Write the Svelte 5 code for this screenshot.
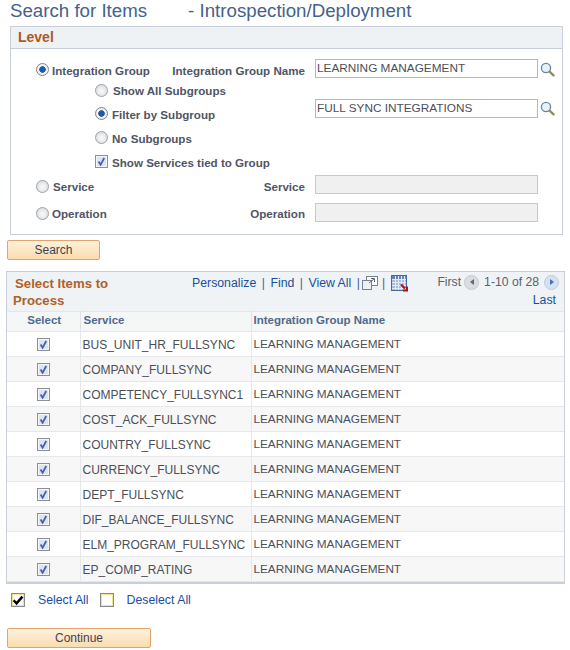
<script>
  const rows = ['BUS_UNIT_HR_FULLSYNC','COMPANY_FULLSYNC','COMPETENCY_FULLSYNC1','COST_ACK_FULLSYNC','COUNTRY_FULLSYNC','CURRENCY_FULLSYNC','DEPT_FULLSYNC','DIF_BALANCE_FULLSYNC','ELM_PROGRAM_FULLSYNC','EP_COMP_RATING'];
</script>

{#snippet radio(on)}
  <span class="radio" class:on></span>
{/snippet}
{#snippet check()}
  <svg class="chk" width="13" height="13" viewBox="0 0 13 13"><rect x=".5" y=".5" width="12" height="12" fill="#d5dbe8" stroke="#8b8f96"/><rect x="1.5" y="1.5" width="10" height="10" fill="#dde3f0" stroke="#f4f6fa"/><path d="M3.6 6.6 5.6 9.8 9.2 3" fill="none" stroke="#4460b0" stroke-width="1.8"/></svg>
{/snippet}
{#snippet lens()}
  <svg class="lens" width="15" height="15" viewBox="0 0 15 15"><path d="M9.5 9.5l4 3.8" stroke="#8f8f4a" stroke-width="2.4" stroke-linecap="round"/><circle cx="6" cy="6" r="4.6" fill="#e6f1f8" stroke="#6b8598" stroke-width="1.3"/></svg>
{/snippet}

<div class="page">
  <h1>Search for Items<span class="gap"></span>- Introspection/Deployment</h1>
  <section class="level">
    <div class="levelhead">Level</div>
    <div class="levelbody">
      <div class="l row1">
        <span class="c1">{@render radio(true)}<b>Integration Group</b></span>
        <b class="lab">Integration Group Name</b>
        <span class="inp">LEARNING MANAGEMENT</span>{@render lens()}
      </div>
      <div class="sub s1">{@render radio(false)}<b class="far">Show All Subgroups</b></div>
      <div class="sub s2">
        <span class="subl">{@render radio(true)}<b>Filter by Subgroup</b></span>
        <span class="inp">FULL SYNC INTEGRATIONS</span>{@render lens()}
      </div>
      <div class="sub s3">{@render radio(false)}<b>No Subgroups</b></div>
      <div class="sub s4">{@render check()}<b>Show Services tied to Group</b></div>
      <div class="l row2">
        <span class="c1">{@render radio(false)}<b class="far">Service</b></span>
        <b class="lab">Service</b>
        <span class="inp off"></span>
      </div>
      <div class="l row3">
        <span class="c1">{@render radio(false)}<b>Operation</b></span>
        <b class="lab">Operation</b>
        <span class="inp off"></span>
      </div>
    </div>
  </section>

  <button class="btn search">Search</button>

  <section class="grid">
    <div class="ghead">
      <div class="gtitle"><span class="se">Select Items to</span><br />Process</div>
      <div class="gnav">
        <span class="a">Personalize</span><i>|</i><span class="a">Find</span><i>|</i><span class="a">View All</span><i>|</i>
        <svg class="ico pop" width="16" height="14" viewBox="0 0 16 14"><rect x="4.5" y=".5" width="11" height="9" fill="#fff" stroke="#79828c"/><rect x=".5" y="4.5" width="9" height="9" fill="#eef1f3" stroke="#79828c"/><path d="M7 7l5-4M9 2.5h3.5V6" fill="none" stroke="#5c6670"/></svg>
        <i>|</i>
        <svg class="ico" width="17" height="17" viewBox="0 0 17 17"><rect x=".5" y=".5" width="15" height="15" fill="#a9bbd8" stroke="#3f6aa4"/><rect x="1" y="1" width="14" height="3" fill="#6485bb"/><path d="M1 4.5h14M1 7.5h14M1 10.5h14M1 13.5h14M4.5 1v14M7.5 1v14M10.5 1v14M13.5 1v14" stroke="#e4e9f2"/><path d="M10 9.5l4 4M12 15.5h4v-4" fill="none" stroke="#b01020" stroke-width="2.2"/></svg>
      </div>
      <div class="pager">
        <div class="prow"><span class="gr fi">First</span><span class="pg"><span class="tl"></span></span><span class="gr">1-10 of 28</span><span class="pg nx"><span class="tr"></span></span></div>
        <div class="a last">Last</div>
      </div>
    </div>
    <table>
      <thead><tr><th class="cs">Select</th><th class="cv">Service</th><th>Integration Group Name</th></tr></thead>
      <tbody>
        {#each rows as r, i}
          <tr class:alt={i % 2 === 1}><td class="cs">{@render check()}</td><td class="sv">{r}</td><td class="ig">LEARNING MANAGEMENT</td></tr>
        {/each}
      </tbody>
    </table>
  </section>

  <div class="sel">
    <svg width="14" height="14" viewBox="0 0 14 14"><rect x=".5" y=".5" width="13" height="13" fill="#fff" stroke="#8a8a8a"/><rect x="1.5" y="1.5" width="11" height="11" fill="#fff" stroke="#ece48e"/><path d="M2.6 7.2 5.6 10.4 11.4 3.6" fill="none" stroke="#000" stroke-width="2.4"/></svg>
    <span class="a sa">Select All</span>
    <svg width="14" height="14" viewBox="0 0 14 14"><rect x=".5" y=".5" width="13" height="13" fill="#fff" stroke="#8a8a8a"/><rect x="1.5" y="1.5" width="11" height="11" fill="#fff" stroke="#ece48e"/></svg>
    <span class="a">Deselect All</span>
  </div>

  <button class="btn cont">Continue</button>
</div>

<style>
  :global(body) { margin: 0; background: #fff; }
  .page { width: 570px; height: 650px; overflow: hidden; font-family: "Liberation Sans", Arial, sans-serif; font-size: 12px; color: #484e5c; }
  h1 { margin: 0; padding-left: 10px; height: 26px; font-size: 18.7px; line-height: 21px; font-weight: 400; color: #44628c; white-space: nowrap; }
  .gap { display: inline-block; width: 41px; }
  b { font-weight: 700; font-size: 11.6px; color: #4f5565; white-space: nowrap; padding-top: 3px; }

  .level { margin-left: 10px; width: 553px; height: 209px; box-sizing: border-box; border: 1px solid #c9cfd9; }
  .levelhead { height: 21px; line-height: 20px; background: #eef2f4; border-bottom: 1px solid #c9cfd9; padding-left: 7px; font-size: 14px; font-weight: 700; color: #ac5a1e; }
  .levelbody { padding: 8px 0 0 25px; }
  .l, .sub { display: flex; align-items: center; }
  .c1 { display: flex; align-items: center; gap: 3px; width: 134px; flex: none; }
  .lab { width: 135px; text-align: right; flex: none; }
  .inp { box-sizing: border-box; width: 223px; height: 19px; margin-left: 10px; border: 1px solid #b5b9bf; background: #fff; color: #4b4f5a; line-height: 17px; padding-left: 1px; flex: none; align-self: flex-start; font-size: 11.8px; }
  .inp.off { background: #f0f0f0; border-color: #c7cacd; }
  .lens { margin-left: 2px; align-self: flex-start; }
  .sub { padding-left: 59px; }
  .sub :global(.radio) { margin-right: 4px; }
  .far { margin-left: 1px; }
  .row1 { height: 24px; }
  .row1 .inp { margin-top: 2px; }
  .row1 .lens { margin-top: 5px; }
  .s1 { height: 20px; margin-top: -1px; }
  .s1 b { padding-top: 0; }
  .s2 { height: 28px; }
  .s2 b, .s3 b, .row2 b, .row3 b { padding-top: 1px; }
  .s2 .inp { margin-top: -1px; margin-left: 0; }
  .s2 .lens { margin-top: 1px; }
  .s2 :global(.radio), .s3 :global(.radio) { margin-top: -1px; }
  .s3 { height: 20px; }
  .s4 { height: 26px; }
  .subl { display: flex; align-items: center; width: 220px; flex: none; }
  .row2 { height: 24px; }
  .row2 .inp { margin-top: 1px; }
  .row3 { height: 30px; }
  .row3 .inp { margin-top: 5px; }
  .s4 :global(.chk) { margin-right: 4px; }
  .radio { flex: none; display: inline-block; box-sizing: border-box; width: 13px; height: 13px; border-radius: 50%; border: 1px solid #9da1a6; background: radial-gradient(circle at 50% 55%, #f4f5f6 20%, #cfd2d5 100%); }
  .radio.on { background: radial-gradient(circle, #0f5fb5 0 30%, #3d5a80 38%, #eef0f3 46% 75%, #c9ccd0 100%); border-color: #7d8490; }

  .btn { display: block; box-sizing: border-box; margin: 0 0 0 7px; height: 20px; padding: 0; border: 1px solid #e0a36c; border-radius: 2px; background: linear-gradient(#fdf1dc, #fbdcae); font-family: inherit; font-size: 12px; color: #3c4452; }
  .search { width: 93px; margin-top: 5px; }
  .grid { margin: 11px 0 0 6px; width: 559px; box-sizing: border-box; border: 1px solid #c9cfd9; border-bottom-width: 2px; }
  .ghead { position: relative; height: 39px; background: #eff3f5; }
  .gtitle { position: absolute; left: 6px; top: 3px; font-size: 13.2px; line-height: 17px; font-weight: 700; color: #b0622a; white-space: nowrap; }
  .se { margin-left: 2px; }
  .gnav { position: absolute; left: 185px; top: 2px; height: 18px; display: flex; align-items: center; }
  .gnav i { font-style: normal; color: #3f5f9e; margin: 0 5.5px; font-size: 12px; }
  .ico { display: block; }
  .pop { margin: 0 -2px 0 -3px; }
  .a { color: #1b4f9c; font-size: 12.3px; }
  .gr { color: #5a6070; font-size: 12.2px; }
  .fi { margin-right: -2px; }
  .pager { position: absolute; right: 5px; top: 1px; text-align: right; }
  .prow { display: flex; align-items: center; height: 18px; gap: 5px; }
  .pg { width: 15px; height: 15px; border-radius: 50%; background: #dadde1; border: 1px solid #c6cbd2; box-sizing: border-box; display: flex; align-items: center; justify-content: center; }
  .pg.nx { background: #d2e2f4; }
  .tl { border: 3.5px solid transparent; border-right: 4px solid #666; border-left: 0; }
  .tr { border: 3.5px solid transparent; border-left: 4px solid #456fae; border-right: 0; }
  .last { margin: 1px 3px 0 0; line-height: 17px; }

  table { border-collapse: collapse; width: 100%; table-layout: fixed; }
  th { height: 20px; box-sizing: border-box; padding: 0 0 3px 2px; background: #f5f6f6; color: #4f6a8e; font-size: 11.5px; font-weight: 700; text-align: left; border-right: 1px solid #e0e3e6; border-top: 1px solid #e4e7ea; border-bottom: 1px solid #e4e7ea; }
  th.cs { width: 73px; text-align: center; padding: 0 0 3px 2px; }
  th.cv { width: 171px; padding-left: 3px; }
  td { height: 25px; box-sizing: border-box; padding: 0 0 0 2px; border-right: 1px solid #e5e7e9; border-bottom: 1px solid #e5e7e9; color: #4b4f5a; white-space: nowrap; }
  td.sv { padding-top: 2px; }
  td.ig { font-size: 11.75px; padding-bottom: 1px; }
  td.cs { text-align: center; padding: 0; }
  td.cs :global(.chk) { display: block; margin: 1px auto 0; }
  tr.alt td { background: #f7f7f7; }
  th:last-child, td:last-child { border-right: 0; }
  .sel { display: flex; align-items: center; height: 16px; margin: 8px 0 0 11px; }
  .sel .a { margin-left: 13px; }
  .sel .sa { margin-right: 11px; }
  .cont { width: 144px; margin-top: 20px; }
</style>
